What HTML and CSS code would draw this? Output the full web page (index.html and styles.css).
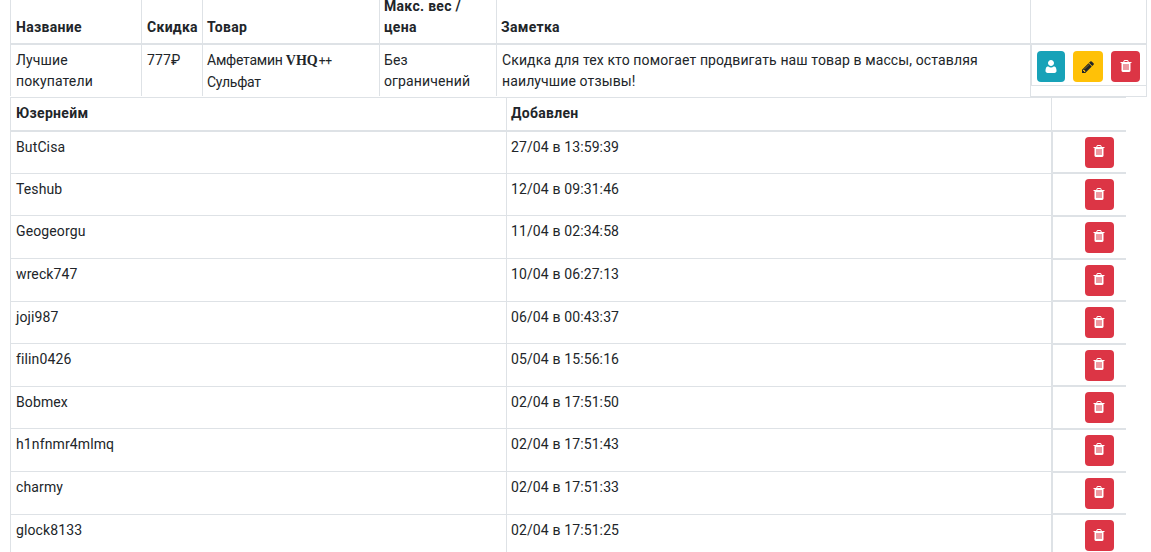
FILE: index.html
```html
<!DOCTYPE html>
<html lang="ru">
<head>
<meta charset="utf-8">
<title>Скидки</title>
<link rel="stylesheet" href="styles.css">
</head>
<body>
<svg class="defs" width="0" height="0" aria-hidden="true">
<symbol id="i-trash" viewBox="0 0 1408 1792"><path d="M512 1248v-704q0-14-9-23t-23-9h-64q-14 0-23 9t-9 23v704q0 14 9 23t23 9h64q14 0 23-9t9-23zm256 0v-704q0-14-9-23t-23-9h-64q-14 0-23 9t-9 23v704q0 14 9 23t23 9h64q14 0 23-9t9-23zm256 0v-704q0-14-9-23t-23-9h-64q-14 0-23 9t-9 23v704q0 14 9 23t23 9h64q14 0 23-9t9-23zm-544-992h448l-48-117q-7-9-17-11h-317q-10 2-17 11zm928 32v64q0 14-9 23t-23 9h-96v948q0 83-47 143.5t-113 60.5h-832q-66 0-113-58.5t-47-141.5v-952h-96q-14 0-23-9t-9-23v-64q0-14 9-23t23-9h309l70-167q15-37 54-63t79-26h320q40 0 79 26t54 63l70 167h309q14 0 23 9t9 23z"/></symbol>
<symbol id="i-user" viewBox="0 0 1408 1792"><path d="M1408 1393q0 120-73 189.5t-194 69.5h-874q-121 0-194-69.5t-73-189.5q0-53 3.5-103.5t14-109 26.5-108.5 43-97.5 62-81 85.5-53.5 111.5-20q9 0 42 21.5t74.5 48 108 48 133.5 21.5 133.5-21.5 108-48 74.5-48 42-21.5q61 0 111.5 20t85.5 53.5 62 81 43 97.5 26.5 108.5 14 109 3.5 103.5zm-320-1009q0 159-112.5 271.5t-271.5 112.5-271.5-112.5-112.5-271.5 112.5-271.5 271.5-112.5 271.5 112.5 112.5 271.5z"/></symbol>
<symbol id="i-pencil" viewBox="0 0 1536 1792"><path d="M363 1536l91-91-235-235-91 91v107h128v128h107zm523-928q0-22-22-22-10 0-17 7l-542 542q-7 7-7 17 0 22 22 22 10 0 17-7l542-542q7-7 7-17zm-54-192l416 416-832 832h-416v-416zm683 96q0 53-37 90l-166 166-416-416 166-165q36-38 90-38 53 0 91 38l235 234q37 39 37 91z"/></symbol>
</svg>
<main class="page">
<table class="discounts">
<colgroup><col class="c-name"><col class="c-disc"><col class="c-prod"><col class="c-max"><col class="c-note"><col class="c-act"></colgroup>
<thead><tr><th>Название</th><th>Скидка</th><th>Товар</th><th>Макс. вес /<br>цена</th><th>Заметка</th><th></th></tr></thead>
<tbody><tr>
<td>Лучшие<br>покупатели</td><td>777₽</td><td class="tight">Амфетамин <span class="serif">VHQ</span><span class="plus">++</span><br>Сульфат</td><td>Без<br>ограничений</td><td>Скидка для тех кто помогает продвигать наш товар в массы, оставляя<br>наилучшие отзывы!</td>
<td class="actions"><div class="action-box">
<button class="btn info"><svg class="ic"><use href="#i-user"/></svg></button>
<button class="btn warn"><svg class="ic"><use href="#i-pencil"/></svg></button>
<button class="btn danger"><svg class="ic"><use href="#i-trash"/></svg></button>
</div></td>
</tr></tbody>
</table>
<table class="users">
<colgroup><col class="u-name"><col class="u-date"><col class="u-act"></colgroup>
<thead><tr><th>Юзернейм</th><th>Добавлен</th><th></th></tr></thead>
<tbody>
<tr><td>ButCisa</td><td>27/04 в 13:59:39</td><td class="del"><button class="btn danger"><svg class="ic"><use href="#i-trash"/></svg></button></td></tr>
<tr><td>Teshub</td><td>12/04 в 09:31:46</td><td class="del"><button class="btn danger"><svg class="ic"><use href="#i-trash"/></svg></button></td></tr>
<tr><td>Geogeorgu</td><td>11/04 в 02:34:58</td><td class="del"><button class="btn danger"><svg class="ic"><use href="#i-trash"/></svg></button></td></tr>
<tr><td>wreck747</td><td>10/04 в 06:27:13</td><td class="del"><button class="btn danger"><svg class="ic"><use href="#i-trash"/></svg></button></td></tr>
<tr><td>joji987</td><td>06/04 в 00:43:37</td><td class="del"><button class="btn danger"><svg class="ic"><use href="#i-trash"/></svg></button></td></tr>
<tr><td>filin0426</td><td>05/04 в 15:56:16</td><td class="del"><button class="btn danger"><svg class="ic"><use href="#i-trash"/></svg></button></td></tr>
<tr><td>Bobmex</td><td>02/04 в 17:51:50</td><td class="del"><button class="btn danger"><svg class="ic"><use href="#i-trash"/></svg></button></td></tr>
<tr><td>h1nfnmr4mlmq</td><td>02/04 в 17:51:43</td><td class="del"><button class="btn danger"><svg class="ic"><use href="#i-trash"/></svg></button></td></tr>
<tr><td>charmy</td><td>02/04 в 17:51:33</td><td class="del"><button class="btn danger"><svg class="ic"><use href="#i-trash"/></svg></button></td></tr>
<tr><td>glock8133</td><td>02/04 в 17:51:25</td><td class="del"><button class="btn danger"><svg class="ic"><use href="#i-trash"/></svg></button></td></tr>
</tbody>
</table>
</main>
</body>
</html>
```
FILE: styles.css
```css
html, body {
  margin: 0;
  height: 552px;
  overflow: hidden;
  background: #fff;
}
.defs { display: block; height: 0; }
.page {
  padding-left: 10px;
  font: 14px/21px Roboto, sans-serif;
  letter-spacing: .12px;
  color: #212529;
}
table {
  border-collapse: collapse;
  table-layout: fixed;
  font: inherit;
  letter-spacing: inherit;
  color: inherit;
}
th, td {
  border: 1px solid #dee2e6;
  padding: 0 5px;
  text-align: left;
  vertical-align: top;
}
th { vertical-align: bottom; font-weight: 700; letter-spacing: .3px; }
thead th { border-bottom-width: 2px; }
.discounts { width: 1137px; margin-top: -4px; }
.discounts th { border-top: 0; padding-bottom: 5px; }
.discounts td { padding-top: 5px; height: 52px; box-sizing: border-box; border-bottom: 0; }
.discounts th:nth-child(3), .discounts th:nth-child(4), .discounts th:nth-child(5),
.discounts td:nth-child(3), .discounts td:nth-child(4) { padding-left: 4px; }
.c-name { width: 131px; }
.c-disc { width: 61px; }
.c-prod { width: 177px; }
.c-max { width: 117px; }
.c-note { width: 534px; }
.c-act { width: 116px; }
.discounts td.actions { padding: 0; border-bottom: 1px solid #dee2e6; }
.action-box {
  display: flex;
  gap: 8px;
  padding: 6px 5px 4px;
  height: 41px;
  box-sizing: border-box;
  border-bottom: 1px solid #dee2e6;
  border-left: 1px solid #dee2e6;
}
.users { width: 1115px; }
.u-name { width: 496px; }
.u-date { width: 545px; }
.u-act { width: 74px; }
.users th { padding: 5px; height: 33.8px; box-sizing: border-box; vertical-align: top; }
.users td { padding: 5px 5px 0; height: 42.6px; box-sizing: border-box; }
.users th:nth-child(2), .users td:nth-child(2) { padding-left: 4px; }
.users td.del { padding: 5px 11px 0 32px; border-left-width: 2px; border-bottom-width: 2px; border-right: 0; }
.users th:last-child { border-right: 0; }
.btn {
  display: flex;
  align-items: center;
  justify-content: center;
  width: 29px;
  height: 31px;
  padding: 0;
  border: 0;
  border-radius: 4px;
}
.ic { width: 12px; height: 14px; fill: currentColor; }
.info { background: #17a2b8; color: #fff; width: 28px; }
.warn { background: #ffc107; color: #212529; width: 30px; }
.danger { background: #dc3545; color: #fff; }
.discounts td.tight { letter-spacing: -.25px; }
.serif { font-family: "Liberation Serif", serif; font-weight: 700; font-size: 14px; letter-spacing: 0; }
.plus { font-size: 12px; margin-left: 1px; }
```
